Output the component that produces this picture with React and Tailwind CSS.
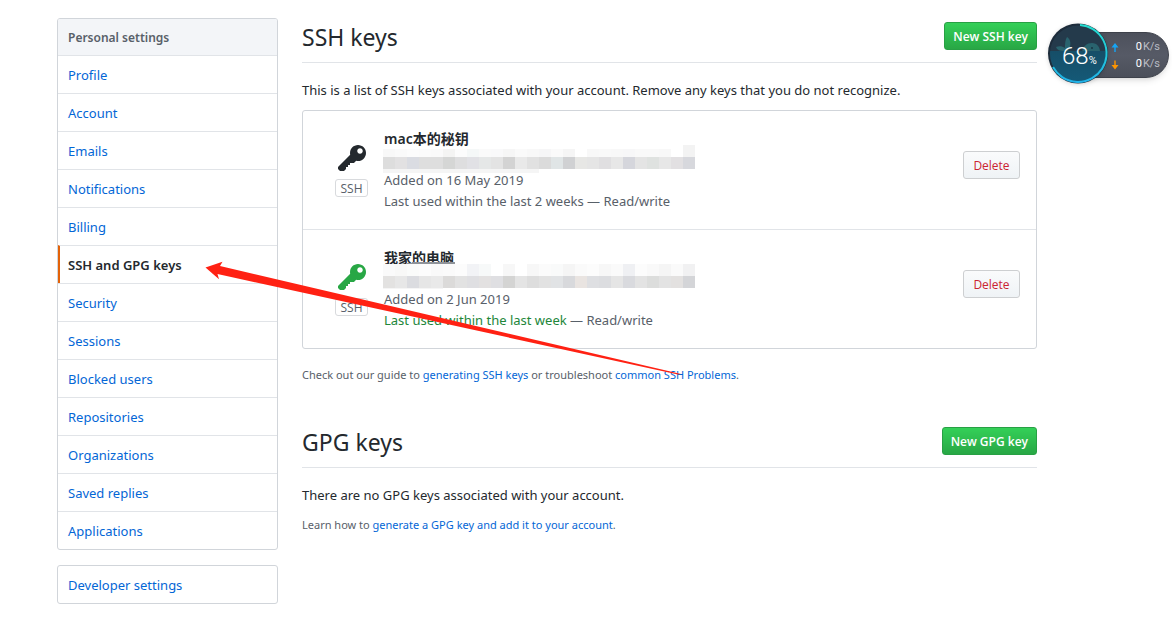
import React from 'react';

const menuItems = [
    'Profile',
    'Account',
    'Emails',
    'Notifications',
    'Billing',
    'SSH and GPG keys',
    'Security',
    'Sessions',
    'Blocked users',
    'Repositories',
    'Organizations',
    'Saved replies',
    'Applications'
];

const sshKeys = [
    {
        title: 'mac本的秘钥',
        added: 'Added on 16 May 2019',
        lastUsed: 'Last used within the last 2 weeks',
        recent: false,
        mosaic: {
            topHeight: 8,
            bottomHeight: 4,
            bottomTiles: 13,
            top: ['#f8f8f8', '#fafafa', '#fcfcfc', '#fbfbfb', '#fafafa', '#f4f4f3', '#fcfcfc', '#f5f8f8', '#fafafa', '#f9f9fa', '#f6f6f6', '#fafafa', '#f8f8f8', '#f6f6f7', '#fafafa', '#f5f5f5', '#ffffff', '#f8f8f8', '#f9f9f9', '#f8f8f8', '#f7f7f8', '#f9f9f9', '#f9f9f9', '#f8f8f8', '#ffffff', '#f3f3f3'],
            main: ['#dddddd', '#e2e1e2', '#dadce2', '#dedede', '#dedede', '#d5d6d5', '#dededf', '#e1e1e5', '#e5e7e7', '#e3e3e3', '#d3d3d3', '#e9e9e9', '#e1e1e1', '#dbdbdb', '#e0e5e6', '#d0d1d3', '#e7e7e5', '#e5e5e5', '#e0dfe1', '#e7e7e7', '#d5d6dc', '#e4e4e4', '#dfe2e0', '#e7e7e7', '#e2e0e2', '#d7d8dd'],
            extra: <rect x="300" y="-4" width="12" height="12" fill="#f3f3f3" />
        }
    },
    {
        title: '我家的电脑',
        added: 'Added on 2 Jun 2019',
        lastUsed: 'Last used within the last week',
        recent: true,
        mosaic: {
            topHeight: 12,
            bottomHeight: 1,
            bottomTiles: 5,
            top: ['#fafafa', '#f8f8f7', '#fafbfa', '#fcfcfc', '#f9f9f9', '#fafafa', '#fcfcfc', '#f2f3f6', '#f7f9f9', '#ffffff', '#f7f7f7', '#ffffff', '#f7f7f7', '#fbfbfb', '#f9fafa', '#f5f5f5', '#fafafa', '#fcfcfc', '#f7f7f7', '#fafafa', '#eff0f3', '#fcfcfc', '#f9f9f9', '#f5f5f5', '#fafafa', '#f1f1f2'],
            main: ['#e3e2e1', '#e7e7e7', '#dbdce0', '#e6e6e6', '#e9e9e9', '#dbdad9', '#e2e2e2', '#dfdfe2', '#e3e1e1', '#dfdfe2', '#d4d4d3', '#e4e4e4', '#dddddd', '#e2e2e2', '#e1e3e5', '#d8d9dc', '#e9e4e1', '#dedfe2', '#dcdde0', '#e5e5e5', '#d9dade', '#e3e3e3', '#dcdddc', '#e3e3e3', '#e3e1e0', '#d4d5d8'],
            extra: <path d="M20 -4L32 -6H72V-4z" fill="#8f9399" />
        }
    }
];

function KeyIcon() {
    return (
        <svg viewBox="0 0 14 16" width="28" height="32" fill="currentColor" aria-hidden="true">
            <path
                fillRule="evenodd"
                d="M12.83 2.17C12.08 1.42 11.14 1.03 10 1c-1.13.03-2.08.42-2.83 1.17S6.04 3.86 6.01 5c0 .3.03.59.09.89L0 12v1l1 1h2l1-1v-1h1v-1h1v-1h2l1.09-1.11c.3.08.59.11.91.11 1.14-.03 2.08-.42 2.83-1.17S13.97 6.14 14 5c-.03-1.14-.42-2.08-1.17-2.83zM11 5.38c-.77 0-1.38-.61-1.38-1.38 0-.77.61-1.38 1.38-1.38.77 0 1.38.61 1.38 1.38 0 .77-.61 1.38-1.38 1.38z"
            />
        </svg>
    );
}

// Pixelated cover over the key fingerprint
function Mosaic({ mosaic }) {
    const { topHeight, bottomHeight, bottomTiles, top, main, extra } = mosaic;
    return (
        <svg className="block -ml-px" width="312" height="21" overflow="visible" shapeRendering="crispEdges" aria-hidden="true">
            {top.map((color, i) => (
                <rect key={i} x={i * 12} y={8 - topHeight} width="12" height={topHeight} fill={color} />
            ))}
            {main.map((color, i) => (
                <rect key={i} x={i * 12} y="8" width="12" height="12" fill={color} />
            ))}
            <rect x="0" y="20" width={bottomTiles * 12} height={bottomHeight} fill="#f5f5f5" />
            {extra}
        </svg>
    );
}

function SettingsMenu() {
    return (
        <aside className="w-[221px] shrink-0 text-[13px] leading-[22px]">
            <nav className="mb-[15px] border border-[#d1d5da] rounded-[3px] overflow-hidden" aria-label="Personal settings">
                <h3 className="h-9 px-[10px] py-2 bg-[#f3f5f8] text-[#586069] font-semibold text-xs leading-[22px]">Personal settings</h3>
                {menuItems.map((item) =>
                    item === 'SSH and GPG keys' ? (
                        <a key={item} href="#" aria-current="page" className="block h-[38px] pl-2 pr-[10px] py-2 border-t border-t-[#e1e4e8] border-l-2 border-l-[#e36209] text-[#24292e] font-semibold">{item}</a>
                    ) : (
                        <a key={item} href="#" className="block h-[38px] px-[10px] py-2 border-t border-[#e1e4e8] text-[#0366d6]">{item}</a>
                    )
                )}
            </nav>
            <nav className="border border-[#d1d5da] rounded-[3px]" aria-label="Developer settings">
                <a href="#" className="block h-[37px] px-[10px] py-2 text-[#0366d6]">Developer settings</a>
            </nav>
        </aside>
    );
}

function SectionHeader({ title, action }) {
    return (
        <div className="flex items-start justify-between h-[45px] pt-1 border-b border-[#e1e4e8]">
            <h2 className="text-[23px] leading-[30px]">{title}</h2>
            <button className="h-7 px-2 pt-[2px] rounded-[3px] border border-[#28a044] bg-linear-to-b from-[#34d058] to-[#28a745] text-white text-xs font-semibold font-['Open_Sans',sans-serif]">{action}</button>
        </div>
    );
}

function SshKey({ sshKey }) {
    return (
        <li className="flex items-start box-content h-[118px] pl-8 pr-4">
            <div className={sshKey.recent ? 'w-[33px] mt-8 flex flex-col items-center gap-1 text-[#28a745]' : 'w-[33px] mt-8 flex flex-col items-center gap-1 text-[#24292e]'}>
                <KeyIcon />
                <span className="w-full h-[18px] border border-[#d8dadd] rounded-[3px] text-center text-xs leading-[18px] text-[#586069] font-['Open_Sans',sans-serif]">SSH</span>
            </div>
            <div className="flex-1 ml-4 mt-[17px] text-[13px] leading-[21px] text-[#586069]">
                <strong className="block h-[21px] text-sm leading-[21px] font-semibold text-[#24292e]">{sshKey.title}</strong>
                <Mosaic mosaic={sshKey.mosaic} />
                <span className="block">{sshKey.added}</span>
                <span className="block">
                    <span className={sshKey.recent ? 'text-[#22863a]' : ''}>{sshKey.lastUsed}</span> — Read/write
                </span>
            </div>
            <button className="w-[57px] h-7 mt-10 pt-[2px] rounded-[3px] border border-[#cdcfd1] bg-linear-to-b from-[#fafbfc] to-[#eff3f6] text-[#cb2431] text-xs font-['Open_Sans',sans-serif]">Delete</button>
        </li>
    );
}

function SpeedRow({ up }) {
    return (
        <div className="flex items-center justify-between h-[17px]">
            <svg width="8" height="10" viewBox="0 0 8 10" aria-hidden="true">
                {up ? (
                    <path d="M4 0L7.5 4.5H4.7V9H3.3V4.5H.5z" fill="#16a5f5" />
                ) : (
                    <path d="M4 9.5L.5 5H3.3V.5h1.4V5h2.8z" fill="#ff9500" />
                )}
            </svg>
            <span className="flex gap-px font-['Roboto',sans-serif] text-[11px] text-[#b9bcc4]"><span className="text-white">0</span>K/s</span>
        </div>
    );
}

// Desktop speed monitor floating over the page
function SpeedWidget() {
    return (
        <div className="absolute top-[23px] right-[3px] w-[121px] h-[61px]">
            <div className="absolute top-[9px] right-0 w-[90px] h-[46px] pt-[6px] pl-[31px] pr-2 rounded-r-full bg-linear-to-b from-[#4d515c] via-[#565a66] to-[#4b4f5a] border border-[#3e424b] shadow-md">
                <SpeedRow up />
                <SpeedRow />
            </div>
            <svg className="absolute top-0 left-0 drop-shadow-sm" width="61" height="61" viewBox="0 0 61 61" aria-hidden="true">
                <defs>
                    <clipPath id="dial"><circle cx="30" cy="30.5" r="28" /></clipPath>
                    <linearGradient id="water" x1="0" y1="0" x2="0" y2="1">
                        <stop offset="0" stopColor="#164e68" />
                        <stop offset="1" stopColor="#145a78" />
                    </linearGradient>
                    <linearGradient id="ring" x1="0" y1="0" x2="0" y2="1">
                        <stop offset="0" stopColor="#25dccf" />
                        <stop offset="1" stopColor="#20b2e8" />
                    </linearGradient>
                </defs>
                <circle cx="30" cy="30.5" r="30" fill="#1d2c3b" />
                <g clipPath="url(#dial)">
                    <rect width="61" height="61" fill="#243a4b" />
                    <path d="M19 14c3 2 4 5 3 10l-2 4h-4c-4 0-7-1-8-4 3-1 6-1 9 1 0-4 0-8 2-11z" fill="#29636e" />
                    <path d="M34 29c1-6 5-9 10-9 5 0 8 4 8 9z" fill="#29636e" />
                    <rect y="28" width="61" height="33" fill="url(#water)" />
                    <circle cx="44" cy="25" r="1" fill="#173443" />
                </g>
                <path d="M32 2A28.5 28.5 0 1 1 5 44" fill="none" stroke="url(#ring)" strokeWidth="2" />
            </svg>
            <div className="absolute top-[19px] left-[14px] flex items-baseline text-white leading-7 font-['Roboto',sans-serif] font-light">
                <span className="text-2xl leading-7">68</span>
                <span className="text-[11px] font-normal">%</span>
            </div>
        </div>
    );
}

function ArrowMark() {
    return (
        <svg className="absolute top-[260px] left-[204px] pointer-events-none" width="480" height="118" viewBox="204 260 480 118" aria-hidden="true">
            <path d="M205.5 267.5L222.5 261.8L220 266L681 374L678 374.5L217.5 274L219 279.3z" fill="#ff2113" />
        </svg>
    );
}

export default function App() {
    return (
        <div className="relative min-h-screen bg-white text-[#24292e] font-['Noto_Sans','Noto_Sans_CJK_SC',sans-serif]">
            <div className="flex items-start gap-6 pt-[18px] pl-[57px] pr-[135px] pb-8">
                <SettingsMenu />
                <main className="flex-1">
                    <section>
                        <SectionHeader title="SSH keys" action="New SSH key" />
                        <p className="mt-[17px] text-[13px] leading-5">This is a list of SSH keys associated with your account. Remove any keys that you do not recognize.</p>
                        <ul className="mt-[10px] border border-[#d1d5da] rounded-[3px] divide-y divide-[#e1e4e8]">
                            {sshKeys.map((sshKey) => (
                                <SshKey key={sshKey.title} sshKey={sshKey} />
                            ))}
                        </ul>
                        <p className="mt-4 text-[11px] leading-5 text-[#586069]">
                            Check out our guide to <a href="#" className="text-[#0366d6]">generating SSH keys</a> or troubleshoot <a href="#" className="text-[#0366d6]">common SSH Problems</a>.
                        </p>
                    </section>
                    <section className="mt-[38px]">
                        <SectionHeader title="GPG keys" action="New GPG key" />
                        <p className="mt-[17px] text-[13px] leading-5">There are no GPG keys associated with your account.</p>
                        <p className="mt-[10px] text-[11px] leading-5 text-[#586069]">
                            Learn how to <a href="#" className="text-[#0366d6]">generate a GPG key and add it to your account</a>.
                        </p>
                    </section>
                </main>
            </div>
            <ArrowMark />
            <SpeedWidget />
        </div>
    );
}
